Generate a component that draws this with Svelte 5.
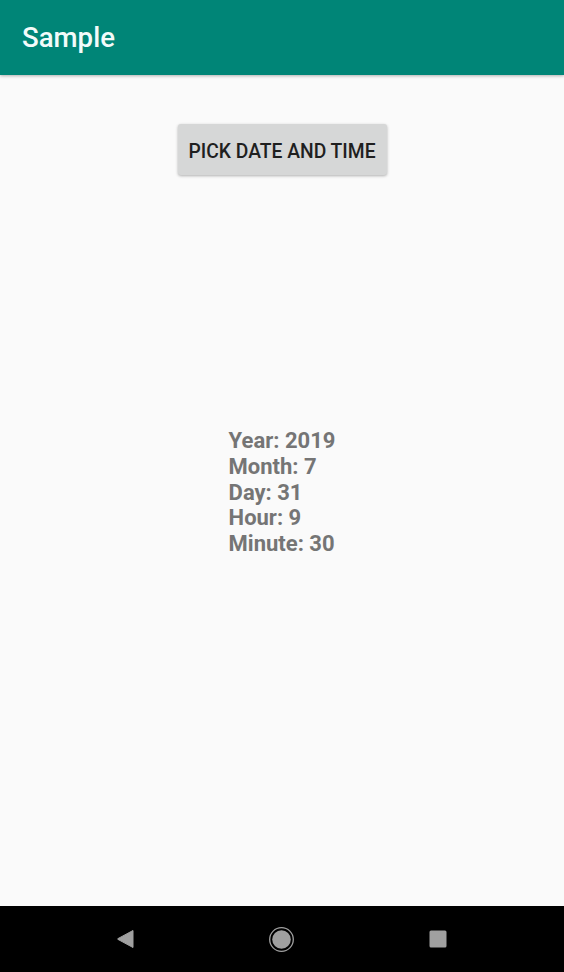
<script>
  let date = { Year: 2019, Month: 7, Day: 31, Hour: 9, Minute: 30 };
</script>

<div class="screen">
  <header class="toolbar">
    <span class="title">Sample</span>
  </header>

  <main class="content">
    <button class="pick">PICK DATE AND TIME</button>
    <div class="result">
      {#each Object.entries(date) as [label, value]}
        <div>{label}: {value}</div>
      {/each}
    </div>
  </main>

  <nav class="navbar">
    <svg width="20" height="20" viewBox="0 0 20 20">
      <path d="M17 1.5 L1.8 9.7 Q1.3 10 1.8 10.3 L17 18.5 Z" fill="#a0a0a0" stroke="#a0a0a0" stroke-width="1" stroke-linejoin="round" />
    </svg>
    <svg width="25" height="25" viewBox="0 0 25 25">
      <circle cx="12.5" cy="12.5" r="11.8" fill="none" stroke="#a0a0a0" stroke-width="1.3" />
      <circle cx="12.5" cy="12.5" r="9.3" fill="#a0a0a0" />
    </svg>
    <svg class="recents" width="18" height="18" viewBox="0 0 18 18">
      <rect x="0.5" y="0.5" width="17" height="17" rx="1.5" fill="#a0a0a0" />
    </svg>
  </nav>
</div>

<style>
  :global(body) {
    margin: 0;
    background: #fafafa;
  }

  .screen {
    display: flex;
    flex-direction: column;
    height: 972px;
    font-family: Roboto, sans-serif;
  }

  .toolbar {
    display: flex;
    align-items: center;
    height: 75px;
    padding-left: 22px;
    background: #008577;
    box-shadow: 0 1px 3px rgba(0, 0, 0, 0.3);
    flex-shrink: 0;
    position: relative;
  }

  .title {
    color: #f2fbfa;
    font-size: 27.6px;
    font-weight: 500;
  }

  .content {
    flex: 1;
    display: flex;
    flex-direction: column;
    align-items: center;
    padding-top: 49px;
    background: #fafafa;
  }

  .pick {
    width: 209px;
    height: 51px;
    padding: 3px 0 0;
    border: none;
    border-radius: 3px;
    background: #d6d7d7;
    box-shadow: 0 1px 3px rgba(0, 0, 0, 0.3);
    color: #1f1f1f;
    font-family: inherit;
    font-size: 19.3px;
    font-weight: 500;
  }

  .result {
    margin-top: 253.4px;
    color: #757575;
    font-size: 22px;
    font-weight: 700;
    line-height: 25.6px;
  }

  .navbar {
    display: flex;
    align-items: center;
    gap: 133px;
    height: 66px;
    padding-left: 116px;
    background: #000;
    flex-shrink: 0;
  }

  .recents {
    margin-left: 2px;
  }
</style>
